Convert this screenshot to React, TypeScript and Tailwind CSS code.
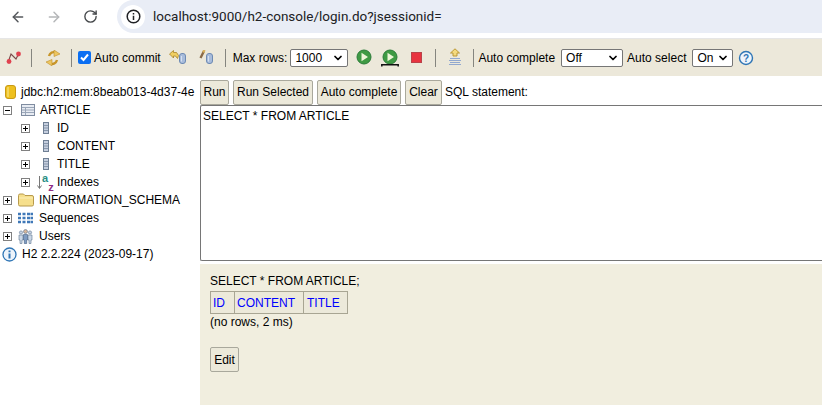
import { ArrowLeft, ArrowRight, RotateCw, ChevronDown } from "lucide-react";

function Sep({ className = "" }: { className?: string }) {
  return <div className={"w-px h-[18px] bg-[#85857f] shrink-0 " + className} />;
}

function Sel({ value, width }: { value: string; width: string }) {
  return (
    <div className={"flex items-center justify-between h-[18px] shrink-0 bg-white border border-[#767676] rounded-[2px] pl-[4px] pr-[3px] text-[12px] text-black " + width}>
      <span>{value}</span>
      <ChevronDown size={12} strokeWidth={3.5} className="text-black" />
    </div>
  );
}

function Btn({ label, className = "" }: { label: string; className?: string }) {
  return (
    <div className={"flex items-center justify-center h-[25px] bg-[#ece9da] border border-[#a9a89c] rounded-[2px] text-[12px] text-black " + className}>
      {label}
    </div>
  );
}

function Box({ open }: { open?: boolean }) {
  return (
    <svg width="9" height="9" viewBox="0 0 9 9" className="shrink-0">
      <rect x="0.5" y="0.5" width="8" height="8" fill="#fff" stroke="#808080" />
      <path d={open ? "M2 4.5h5" : "M2 4.5h5M4.5 2v5"} stroke="#000" />
    </svg>
  );
}

function Column() {
  return (
    <svg width="6" height="12" viewBox="0 0 6 12" className="block">
      <rect x="0.5" y="0.5" width="5" height="11" fill="#c5cede" stroke="#6f7f94" />
      <path d="M1 3.5h4M1 6h4M1 8.5h4" stroke="#8897ab" />
    </svg>
  );
}

function TreeRow({ icon, label }: { icon: React.ReactNode; label: string }) {
  return (
    <div className="flex items-center h-[18px] pl-[21px]">
      <Box />
      <div className="w-[27px] pl-[13px] shrink-0">{icon}</div>
      <span className="text-[12px] text-black">{label}</span>
    </div>
  );
}

function Cylinder({ x }: { x: number }) {
  return (
    <g>
      <rect x={x + 0.5} y="3.5" width="6" height="10" rx="2.5" fill="#a8bcdb" stroke="#6d8ab3" />
      <path d={`M${x + 2.5} 6v5.500`} stroke="#d5e0f0" />
    </g>
  );
}

function GreenPlay({ underline }: { underline?: boolean }) {
  return (
    <svg width="18" height="18" viewBox="0 0 18 18" className="block">
      <circle cx="9" cy="8" r="7" fill="#3f9a44" stroke="#2b7c38" />
      <path d="M6.500 3.800 13 8l-6.500 4.200z" fill="#eef5d8" />
      {underline && <path d="M0.800 17.500v-1.700h16.400v1.700" stroke="#111" strokeWidth="1.500" fill="none" />}
    </svg>
  );
}

export default function App() {
  return (
    <div className="w-[822px] h-[405px] overflow-hidden bg-white flex flex-col font-['Liberation_Sans',sans-serif]">
      <div className="h-[39px] flex shrink-0 border-b border-[#e6e6e6]">
        <div className="w-[117px] flex items-center pl-[10px] pb-[5px] shrink-0">
          <ArrowLeft size={16} strokeWidth={2.2} className="text-[#55585c]" />
          <ArrowRight size={16} strokeWidth={2.2} className="ml-[20px] text-[#b4b6b8]" />
          <RotateCw size={15} strokeWidth={2.2} className="ml-[21px] text-[#45484b]" />
        </div>
        <div className="flex-1 h-[33px] bg-[#e9edf6] rounded-l-[17px] flex items-center pl-[4px]">
          <div className="w-[24px] h-[24px] rounded-full bg-white flex items-center justify-center">
            <svg width="15" height="15" viewBox="0 0 15 15">
              <circle cx="7.500" cy="7.500" r="6.300" fill="none" stroke="#202124" strokeWidth="1.500" />
              <path d="M7.500 6.700v4.300M7.500 4v1.500" stroke="#202124" strokeWidth="1.500" />
            </svg>
          </div>
          <span className="ml-[8px] text-[13.5px] font-['Roboto',sans-serif] text-[#202124]">
            localhost:9000/h2-console/login.do?jsessionid=
          </span>
        </div>
      </div>

      <div className="h-[37px] bg-[#ece8da] flex items-center shrink-0 text-[12px] text-black">
        <svg width="16" height="14" viewBox="0 0 16 14" className="ml-[6px] shrink-0">
          <path d="M2.500 10 5 3l5 5 3-6" fill="none" stroke="#7a4a4a" strokeWidth="1.100" />
          <circle cx="3" cy="10.500" r="2.400" fill="#e0424f" />
          <circle cx="12.500" cy="3" r="2.400" fill="#e0424f" />
        </svg>
        <Sep className="ml-[9px]" />
        <svg width="16" height="16" viewBox="0 0 16 16" className="ml-[13px] shrink-0">
          <path d="M4 6c1-3.500 4-4.500 6-3.500" fill="none" stroke="#c8962a" strokeWidth="2.400" />
          <path d="M9 0l6 4-6 2.500z" fill="#edc660" stroke="#c08f2a" strokeWidth="0.600" />
          <path d="M12 10c-1 3.500-4 4.500-6 3.500" fill="none" stroke="#c8962a" strokeWidth="2.400" />
          <path d="M7 16l-6-4 6-2.500z" fill="#edc660" stroke="#c08f2a" strokeWidth="0.600" />
        </svg>
        <Sep className="ml-[10px]" />
        <div className="ml-[6px] w-[13px] h-[13px] shrink-0 rounded-[2px] bg-[#0b6ff2] flex items-center justify-center">
          <svg width="11" height="11" viewBox="0 0 11 11">
            <path d="M2 5.500 4.500 8 9 2.500" fill="none" stroke="#fff" strokeWidth="2" />
          </svg>
        </div>
        <span className="ml-[3px]">Auto commit</span>
        <svg width="18" height="15" viewBox="0 0 18 15" className="ml-[8px] shrink-0">
          <path d="M0.500 4 4.500 0.500V2.500h3l2 3-1 3-2-2.500H4.500V8z" fill="#f0cf63" stroke="#a8842a" strokeWidth="0.800" />
          <Cylinder x={10} />
        </svg>
        <svg width="15" height="15" viewBox="0 0 15 15" className="ml-[12px] shrink-0">
          <path d="M1.500 8 5 1" stroke="#8a6a48" strokeWidth="2.400" />
          <path d="M4.300 2.500 5.500 0" stroke="#d9b05a" strokeWidth="2.400" />
          <Cylinder x={7} />
        </svg>
        <Sep className="ml-[11px]" />
        <span className="ml-[7px]">Max rows:</span>
        <Sel value="1000" width="w-[58px] ml-[3px]" />
        <div className="ml-[7px] h-[18px] shrink-0"><GreenPlay /></div>
        <div className="ml-[8px] h-[18px] shrink-0"><GreenPlay underline /></div>
        <div className="ml-[12px] w-[11px] h-[11px] shrink-0 bg-[#e8333f] border border-[#b9434a] mb-[1px]" />
        <Sep className="ml-[13px]" />
        <svg width="16" height="19" viewBox="0 0 16 19" className="ml-[11px] shrink-0">
          <path d="M8 0.800 12.500 5H10V8H6V5H3.500z" fill="#f5da7e" stroke="#b5912c" strokeWidth="0.900" />
          <path d="M3 10.500h10M2 12.500h12M3 14.500h10M2 16.500h12" stroke="#92a8cf" />
        </svg>
        <Sep className="ml-[10px]" />
        <span className="ml-[4px]">Auto complete</span>
        <Sel value="Off" width="w-[62px] ml-[6px]" />
        <span className="ml-[4px]">Auto select</span>
        <Sel value="On" width="w-[41px] ml-[6px]" />
        <svg width="16" height="16" viewBox="0 0 16 16" className="ml-[5px] shrink-0">
          <circle cx="8" cy="8" r="6.500" fill="#eef4fb" stroke="#2f75b5" strokeWidth="1.400" />
          <text x="8" y="11.500" textAnchor="middle" fontSize="10" fontWeight="bold" fill="#2f75b5" fontFamily="Liberation Sans">?</text>
        </svg>
      </div>

      <div className="flex flex-1 min-h-0">
        <div className="w-[200px] shrink-0 overflow-hidden pt-[7px] text-[12px] text-black">
          <div className="flex items-center h-[18px] pl-[5px]">
            <svg width="11" height="14" viewBox="0 0 11 14" className="shrink-0">
              <rect x="0.500" y="0.500" width="10" height="13" rx="2.500" fill="#eec01f" stroke="#c99a16" />
              <path d="M3 2v10" stroke="#f6dc70" strokeWidth="1.500" />
            </svg>
            <span className="ml-[5px] whitespace-nowrap">jdbc:h2:mem:8beab013-4d37-4e</span>
          </div>
          <div className="flex items-center h-[18px] pl-[3px]">
            <Box open />
            <svg width="14" height="12" viewBox="0 0 14 12" className="ml-[9px] mr-[5px] shrink-0">
              <rect x="0.500" y="0.500" width="13" height="11" fill="#e7ebf2" stroke="#7f8ca0" />
              <path d="M1 3.500h12M1 6h12M1 8.500h12M4.500 3v8" stroke="#9aa6b8" />
            </svg>
            <span>ARTICLE</span>
          </div>
          <TreeRow icon={<Column />} label="ID" />
          <TreeRow icon={<Column />} label="CONTENT" />
          <TreeRow icon={<Column />} label="TITLE" />
          <div className="flex items-center h-[18px] pl-[21px]">
            <Box />
            <svg width="18" height="24" viewBox="0 0 18 24" className="ml-[7px] mr-[2px] shrink-0">
              <path d="M2.500 6v12M0.500 15.500l2 3 2-3" fill="none" stroke="#777" />
              <text x="5" y="12" fontSize="11" fontWeight="bold" fill="#2b8f85" fontFamily="Liberation Sans">a</text>
              <text x="11.200" y="21" fontSize="11" fontWeight="bold" fill="#8d2a85" fontFamily="Liberation Sans">z</text>
            </svg>
            <span>Indexes</span>
          </div>
          <div className="flex items-center h-[18px] pl-[3px]">
            <Box />
            <svg width="16" height="14" viewBox="0 0 16 14" className="ml-[6px] mr-[5px] shrink-0">
              <path d="M0.500 2.500a1.500 1.500 0 0 1 1.500-1.500h3.500l1.500 1.500h7a1.500 1.500 0 0 1 1.500 1.500v7.500a1.500 1.500 0 0 1-1.500 1.500H2a1.500 1.500 0 0 1-1.500-1.500z" fill="#f6df8c" stroke="#b89a4c" />
              <path d="M1 5h14" stroke="#fbeeb8" />
            </svg>
            <span>INFORMATION_SCHEMA</span>
          </div>
          <div className="flex items-center h-[18px] pl-[3px]">
            <Box />
            <svg width="15" height="12" viewBox="0 0 15 12" className="ml-[6px] mr-[6px] shrink-0">
              <path d="M0 2h3M4.500 2h3M9 2h3M12.500 2h2.500M0 6h3M4.500 6h3M9 6h3M12.500 6h2.500M0 10h3M4.500 10h3M9 10h3M12.500 10h2.500" stroke="#3f78b8" strokeWidth="2.400" />
            </svg>
            <span>Sequences</span>
          </div>
          <div className="flex items-center h-[18px] pl-[3px]">
            <Box />
            <svg width="15" height="15" viewBox="0 0 15 15" className="ml-[6px] mr-[6px] shrink-0">
              <circle cx="3" cy="3.500" r="1.600" fill="#c6d2e2" stroke="#5f7590" strokeWidth="0.600" />
              <circle cx="12" cy="3.500" r="1.600" fill="#c6d2e2" stroke="#5f7590" strokeWidth="0.600" />
              <path d="M1 6h4v5H4v3.500H2V11H1zM10 6h4v5h-1v3.500h-2V11h-1z" fill="#cbd7e6" stroke="#5f7590" strokeWidth="0.600" />
              <circle cx="7.500" cy="2.500" r="2" fill="#d4b59a" stroke="#5f7590" strokeWidth="0.600" />
              <path d="M5.500 5.500h4v5.500h-.8v3.500H6.300V11h-.8z" fill="#7f9cc2" stroke="#3f5a7f" strokeWidth="0.600" />
            </svg>
            <span>Users</span>
          </div>
          <div className="flex items-center h-[18px] pl-[2px]">
            <svg width="15" height="15" viewBox="0 0 15 15" className="shrink-0">
              <circle cx="7.500" cy="7.500" r="6.500" fill="#eef4fb" stroke="#2f75b5" strokeWidth="1.300" />
              <path d="M7.500 6.500v5M7.500 3.500v1.700" stroke="#2f75b5" strokeWidth="2" />
            </svg>
            <span className="ml-[5px]">H2 2.2.224 (2023-09-17)</span>
          </div>
        </div>

        <div className="flex-1 flex flex-col min-w-0">
          <div className="flex items-center h-[29px] shrink-0 gap-[4px] pt-[3px] text-[12px] text-black">
            <Btn label="Run" className="w-[29px]" />
            <Btn label="Run Selected" className="w-[80px]" />
            <Btn label="Auto complete" className="w-[84px]" />
            <Btn label="Clear" className="w-[37px]" />
            <span className="-ml-[1px]">SQL statement:</span>
          </div>
          <div className="h-[156px] shrink-0 border-t border-l border-b border-[#767676] rounded-l-[2px] pl-[2px] pt-[1px] text-[12px] text-black bg-white">
            SELECT * FROM ARTICLE
          </div>
          <div className="flex-1 mt-[3px] bg-[#f1eedf] pl-[10px] pt-[10px] text-[12px] text-black">
            <div className="leading-[14px]">SELECT * FROM ARTICLE;</div>
            <table className="border-collapse mt-[3px]">
              <tbody>
                <tr className="h-[22px]">
                  <td className="w-[24px] border border-[#a8a593] bg-[#ece9da] pl-[2px] text-[#0000ff]">ID</td>
                  <td className="w-[69px] border border-[#a8a593] bg-[#ece9da] pl-[2px] text-[#0000ff]">CONTENT</td>
                  <td className="w-[44px] border border-[#a8a593] bg-[#ece9da] pl-[3px] text-[#0000ff]">TITLE</td>
                </tr>
              </tbody>
            </table>
            <div className="mt-[1px] leading-[14px]">(no rows, 2 ms)</div>
            <Btn label="Edit" className="w-[29px] mt-[18px]" />
          </div>
        </div>
      </div>
    </div>
  );
}
